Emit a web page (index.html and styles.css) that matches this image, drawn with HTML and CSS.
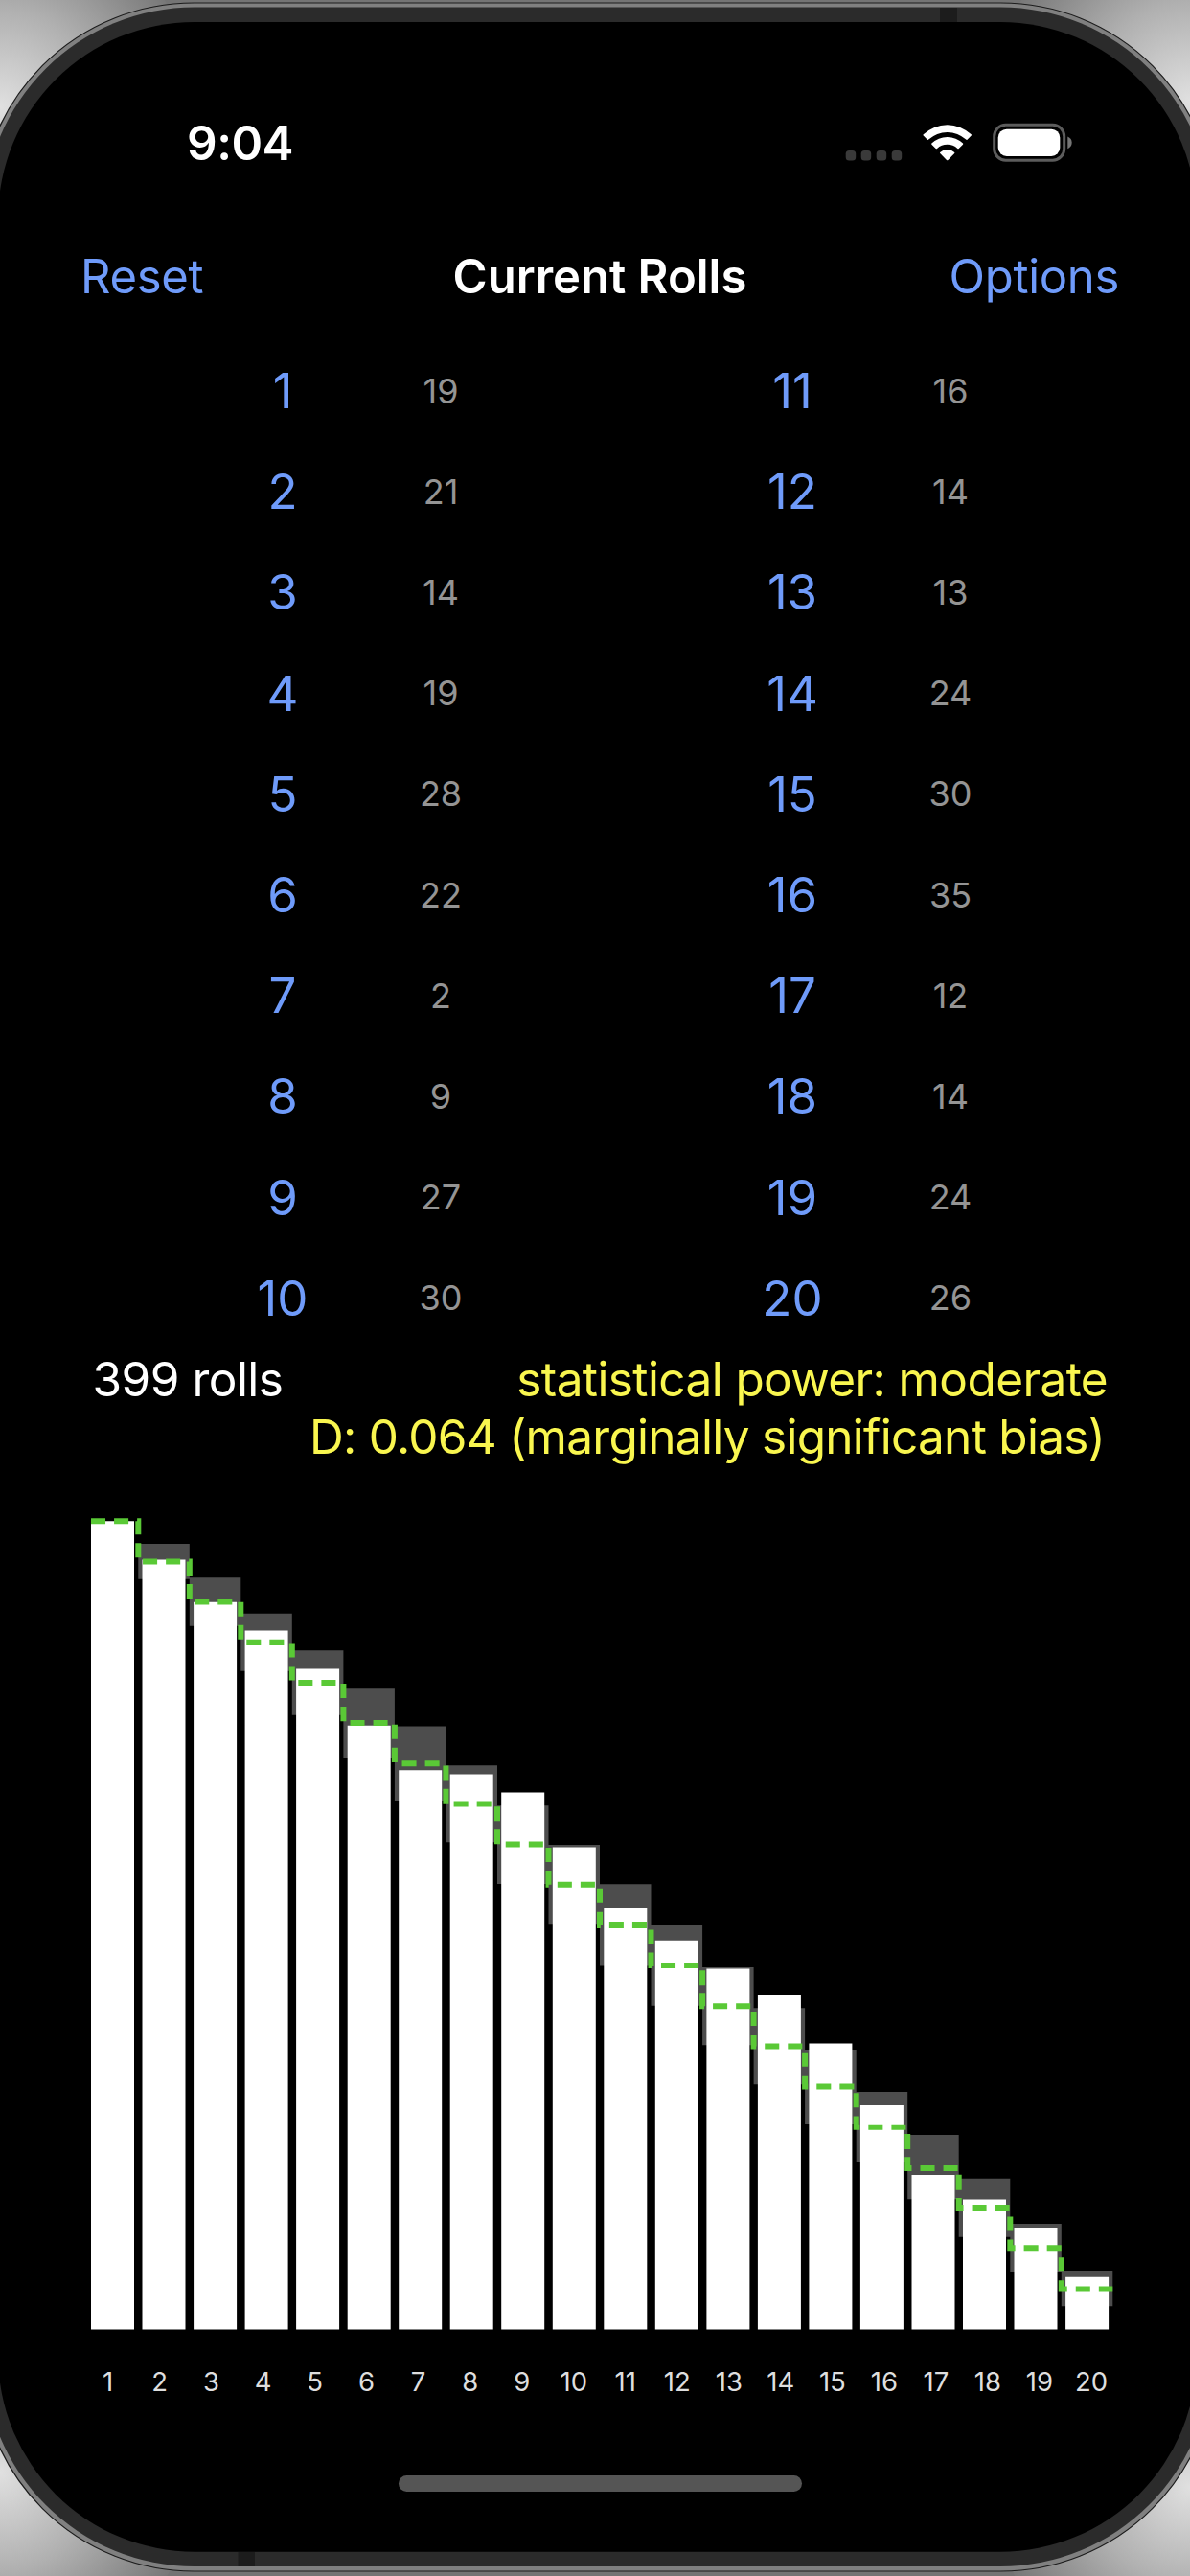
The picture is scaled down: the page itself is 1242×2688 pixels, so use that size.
FILE: index.html
```html
<!DOCTYPE html>
<html lang="en">
<head>
<meta charset="utf-8">
<title>Current Rolls</title>
<link rel="stylesheet" href="styles.css">
</head>
<body>
<svg class="device" viewBox="0 0 1242 2688" aria-hidden="true">
  <defs>
    <radialGradient id="glow"><stop offset="0" stop-color="#e0e0e0"/><stop offset=".5" stop-color="#b0b0b0"/><stop offset="1" stop-color="#787878"/></radialGradient>
  </defs>
  <rect width="1242" height="2688" fill="#747474"/>
  <circle cx="0" cy="112" r="205" fill="url(#glow)"/>
  <circle cx="1242" cy="105" r="205" fill="url(#glow)"/>
  <circle cx="0" cy="2580" r="205" fill="url(#glow)"/>
  <circle cx="1242" cy="2595" r="205" fill="url(#glow)"/>
  <rect x="-21.5" y="3" width="1290" height="2680" rx="224" fill="#808080" stroke="#1c1c1c" stroke-width="1.2"/>
  <rect x="-17" y="7.5" width="1281" height="2670.5" rx="220" fill="#2b2b2b"/>
  <path d="M981 8h18v15h-18zM248.500 2663h17.500v15h-17.500z" fill="#1c1c1c"/>
  <rect x="-2" y="23" width="1251" height="2639.700" rx="205" fill="#000"/>
</svg>
<div class="screen">
  <div class="status">
    <span class="time">9:04</span>
    <svg class="indicators" width="238" height="42" viewBox="882 128 238 42">
      <g fill="#3a3a3a"><rect x="882.700" y="157" width="10.500" height="10.500" rx="3.500"/><rect x="898.700" y="157" width="10.500" height="10.500" rx="3.500"/><rect x="914.700" y="157" width="10.500" height="10.500" rx="3.500"/><rect x="930.700" y="157" width="10.500" height="10.500" rx="3.500"/></g>
      <g fill="#fff"><path d="M963.700 140.300A36.200 36.200 0 0 1 1013.700 140.300Q1014.200 141 1013.700 141.600L1009.500 145.700Q1008.800 146.200 1008.200 145.600A28.500 28.500 0 0 0 969.200 145.600Q968.600 146.200 967.900 145.700L963.700 141.600Q963.200 141 963.700 140.300Z"/><path d="M972.400 149.600A23.500 23.500 0 0 1 1005 149.600Q1005.500 150.200 1005 150.800L1000.700 155Q1000 155.500 999.400 155A15.800 15.800 0 0 0 978 155Q977.400 155.500 976.700 155L972.400 150.800Q971.900 150.200 972.400 149.600Z"/><path d="M981.200 158.900A11 11 0 0 1 996.200 158.900Q996.700 159.500 996.200 160.100L989.400 167Q988.700 167.600 988 167L981.200 160.100Q980.700 159.500 981.200 158.900Z"/></g>
      <rect x="1037.700" y="130.200" width="73" height="37" rx="12" fill="none" stroke="#5c5c5c" stroke-width="3"/>
      <rect x="1041.700" y="134.700" width="64.600" height="28.300" rx="9" fill="#fff"/>
      <path d="M1114.300 142.500Q1118.700 144.500 1118.700 148.800T1114.300 155.200Z" fill="#757575"/>
    </svg>
  </div>
  <nav class="nav">
    <a class="reset">Reset</a><h1>Current Rolls</h1><a class="options">Options</a>
  </nav>
  <main>
    <div class="rolls">
      <b>1</b><i>19</i><b class="second">11</b><i>16</i>
      <b>2</b><i>21</i><b class="second">12</b><i>14</i>
      <b>3</b><i>14</i><b class="second">13</b><i>13</i>
      <b>4</b><i>19</i><b class="second">14</b><i>24</i>
      <b>5</b><i>28</i><b class="second">15</b><i>30</i>
      <b>6</b><i>22</i><b class="second">16</b><i>35</i>
      <b>7</b><i>2</i><b class="second">17</b><i>12</i>
      <b>8</b><i>9</i><b class="second">18</b><i>14</i>
      <b>9</b><i>27</i><b class="second">19</b><i>24</i>
      <b>10</b><i>30</i><b class="second">20</b><i>26</i>
    </div>
    <div class="stats">
      <span class="total">399 rolls</span>
      <div class="result"><p class="power">statistical power: moderate</p><p class="bias">D: 0.064 (marginally significant bias)</p></div>
    </div>
    <svg class="chart" width="1242" height="860" viewBox="0 0 1242 860">
      <path fill="#4d4d4d" d="M144.300 31h53.500v36.700h-53.500zM197.800 66.300h53.500v50.400h-53.500zM251.300 103.700h53.500v60h-53.500zM304.800 142.300h53.600v67.400h-53.600zM358.400 181.300h53.500v72.700h-53.500zM411.900 221.400h53.500v77.500h-53.500zM465.400 262.300h53.600v80h-53.600zM519 303.300h53.500v82.700h-53.500zM572.500 345h53.500v83.300h-53.500zM626 386.300h53.500v84.200h-53.500zM679.500 429h53.600v83.700h-53.600zM733.100 472h53.500v82.300h-53.500zM786.600 515.300h53.500v80h-53.500zM840.100 559h53.600v77h-53.600zM893.700 603h53.500v73h-53.500zM947.200 648h53.500v67.300h-53.500zM1000.700 693.700h53.600v60h-53.600zM1054.300 741h53.500v50h-53.500zM1107.800 790h53.500v36.300h-53.500z"/>
      <path fill="#fff" d="M95 850.600V7.300h45V850.600zM148.500 850.600V47.500h45V850.600zM202.100 850.600V91.800h45V850.600zM255.600 850.600V121.400h45V850.600zM309.100 850.600V161.600h45V850.600zM362.700 850.600V220.800h45V850.600zM416.200 850.600V267.300h45V850.600zM469.700 850.600V271.500h45V850.600zM523.200 850.600V290.500h45V850.600zM576.800 850.600V347.600h45V850.600zM630.300 850.600V411h45V850.600zM683.800 850.600V444.800h45V850.600zM737.400 850.600V474.400h45V850.600zM790.900 850.600V501.900h45V850.600zM844.400 850.600V552.600h45V850.600zM897.900 850.600V616h45V850.600zM951.500 850.600V690h45V850.600zM1005 850.600V715.400h45V850.600zM1058.500 850.600V744.900h45V850.600zM1112.100 850.600V795.700h45V850.600z"/>
      <path fill="none" stroke="#5ac936" stroke-width="6" stroke-dasharray="15.040 9.024" d="M95 7.300H144.300V49.500H197.800V91.600H251.300V133.800H304.800V176H358.400V218.100H411.900V260.300H465.400V302.500H519V344.600H572.500V386.800H626V429H679.500V471.100H733.100V513.300H786.600V555.400H840.100V597.600H893.700V639.800H947.200V681.900H1000.700V724.100H1054.300V766.300H1107.800V808.400H1161.300"/>
    </svg>
    <div class="axis"><span>1</span><span>2</span><span>3</span><span>4</span><span>5</span><span>6</span><span>7</span><span>8</span><span>9</span><span>10</span><span>11</span><span>12</span><span>13</span><span>14</span><span>15</span><span>16</span><span>17</span><span>18</span><span>19</span><span>20</span></div>
  </main>
  <div class="home"></div>
</div>
</body>
</html>
```
FILE: styles.css
```css
* { box-sizing: border-box; margin: 0; padding: 0; }
body {
  width: 1242px;
  height: 2688px;
  overflow: hidden;
  background: #747474;
  color: #fff;
  font-family: Inter, "Liberation Sans", sans-serif;
  font-size: 49.5px;
  position: relative;
}
.device { position: absolute; inset: 0; width: 1242px; height: 2688px; z-index: -1; }
.screen { display: flex; flex-direction: column; height: 2688px; padding-top: 128px; }
.status {
  display: flex;
  justify-content: space-between;
  align-items: center;
  height: 42px;
  padding: 0 122px 0 195px;
}
.time { font-weight: 600; font-size: 49.5px; letter-spacing: -0.5px; }
.indicators { flex: none; }
.nav {
  display: grid;
  grid-template-columns: 1fr auto 1fr;
  align-items: center;
  height: 80px;
  margin-top: 78px;
  padding: 0 74px 0 84px;
}
.nav a { color: #6f9bfa; font-size: 49px; letter-spacing: -0.3px; }
.nav h1 { font-size: 49px; font-weight: 600; }
.options { text-align: right; }
.rolls {
  display: grid;
  grid-template-columns: 165px 165px 367px 165px;
  grid-auto-rows: 105.2px;
  align-items: center;
  justify-items: center;
  margin-top: 27px;
  padding-left: 212.5px;
}
.rolls b { font-weight: 400; font-size: 51px; color: #6f9bfa; }
.rolls .second { padding-left: 202px; }
.rolls i { font-style: normal; font-size: 36px; color: #949494; }
.stats {
  display: flex;
  justify-content: space-between;
  margin-top: 2px;
  padding: 0 86px 0 96.5px;
  line-height: 60px;
  white-space: nowrap;
}
.total { letter-spacing: -0.5px; }
.result { text-align: right; color: #f9f64f; }
.power { letter-spacing: -0.6px; }
.bias { padding-right: 3px; letter-spacing: -0.72px; }
.chart { display: block; margin-top: 51px; }
.axis {
  display: grid;
  grid-template-columns: repeat(20, 1fr);
  margin: 25px 76px 0 85.500px;
  font-size: 27.5px;
  line-height: 40px;
  text-align: center;
  color: #dedede;
}
.home { width: 421px; height: 17px; margin: 78px 0 0 416px; border-radius: 9px; background: #555; }
```
